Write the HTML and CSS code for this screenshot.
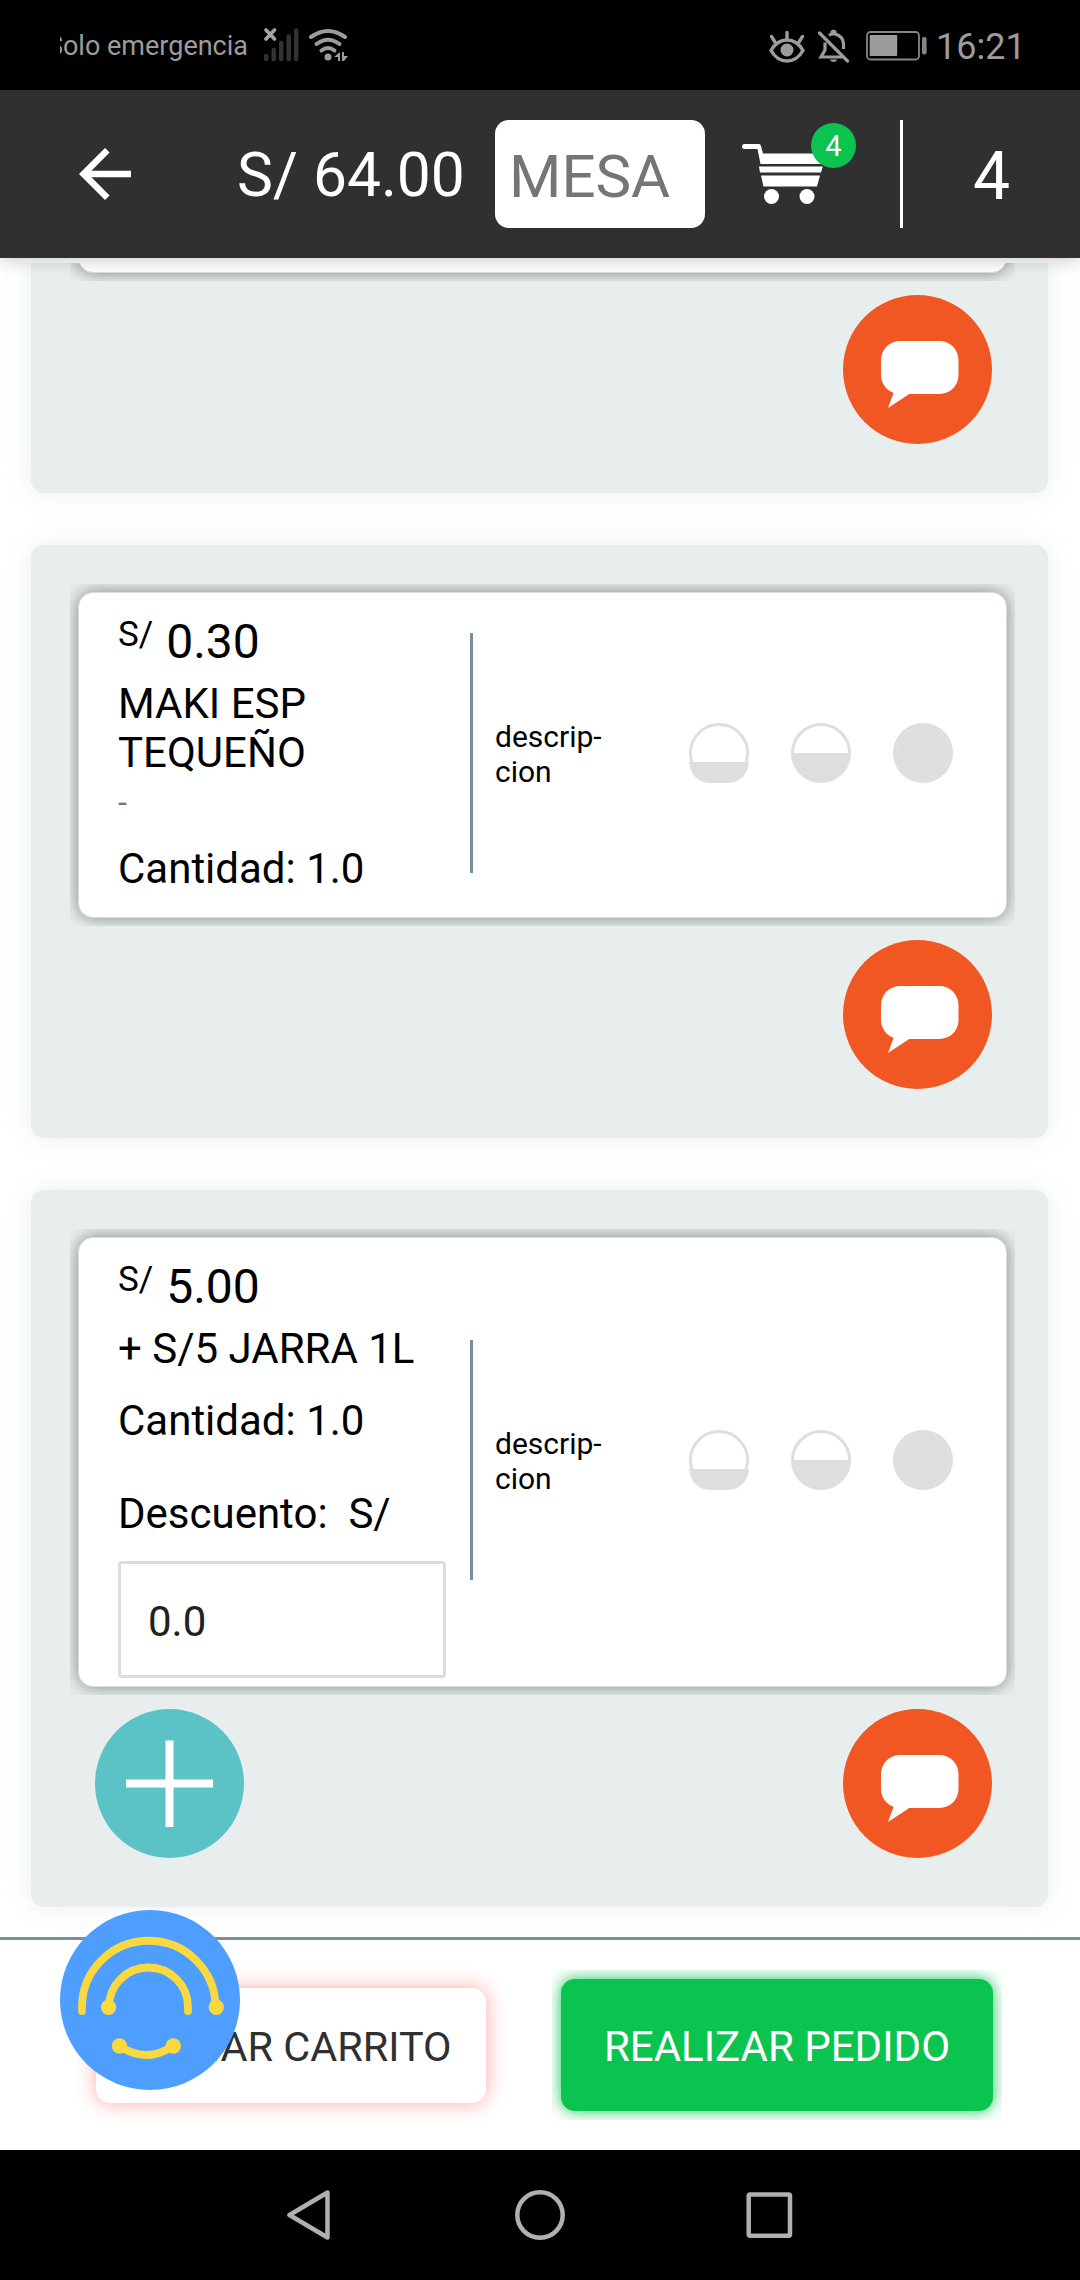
FILE: index.html
```html
<!DOCTYPE html>
<html lang="es">
<head>
<meta charset="utf-8">
<title>Carrito</title>
<link rel="stylesheet" href="styles.css">
</head>
<body>
<svg class="defs" width="0" height="0" aria-hidden="true">
  <symbol id="bubble" viewBox="0 0 149 149">
    <circle cx="74.5" cy="74.5" r="74.5" fill="#f15722"/>
    <rect x="38" y="46" width="77.5" height="53" rx="19" fill="#fff"/>
    <path d="M52 94L45 113L67 98.5Z" fill="#fff"/>
  </symbol>
  <symbol id="levels" viewBox="0 0 264 60">
    <g fill="none" stroke="#dedede" stroke-width="3">
      <path d="M2.960 39A28.500 28.500 0 1 1 57.040 39"/>
      <circle cx="132" cy="30" r="28.500"/>
    </g>
    <g fill="#dedede">
      <path d="M0 39H60C59 51 51 60 39 60H21C9 60 1 51 0 39Z"/>
      <path d="M103 30H161A29 29 0 0 1 103 30Z"/>
      <circle cx="234" cy="30" r="30"/>
    </g>
    <circle cx="234" cy="30" r="27" fill="none" stroke="#e3e3e3" stroke-width="1"/>
  </symbol>
</svg>
<div class="screen">
  <div class="status">
    <div class="carrier"><span>Solo emergencia</span></div>
    <svg class="signal" width="36" height="34" viewBox="264 28 36 34">
      <path d="M266.200 56V59M273.700 50V59M281.200 43V59M288.700 36.500V59M296.200 30.500V59" stroke="#333" stroke-width="4.400" stroke-linecap="round"/>
      <path d="M266 30L274.500 39M274.500 30L266 39" stroke="#a5a5a5" stroke-width="3.600" stroke-linecap="round"/>
    </svg>
    <svg class="wifi" width="40" height="34" viewBox="308 28 40 34">
      <g fill="none" stroke="#9c9c9c" stroke-width="4" stroke-linecap="round">
        <path d="M311 37Q328 25 345 37"/><path d="M316.500 44Q328 35.500 339.500 44"/><path d="M321.500 50.500Q328 45.500 334.500 50.500"/>
      </g>
      <circle cx="328" cy="57" r="3.500" fill="#9c9c9c"/>
      <path d="M334 57L340 52V61H338V57ZM342 52V61H344L348 56H344V52Z" fill="#9c9c9c"/>
    </svg>
    <svg class="eye" width="36" height="34" viewBox="769 29 36 34">
      <g fill="none" stroke="#9c9c9c" stroke-width="3.400" stroke-linecap="round">
        <path d="M771 50.500Q777 40 787 40Q797 40 803 50.500Q797 61 787 61Q777 61 771 50.500Z"/>
        <path d="M787 32.500V38M771.500 36.500L775 42M802.500 36.500L799 42"/>
      </g>
      <circle cx="787" cy="50" r="6.500" fill="#9c9c9c"/>
    </svg>
    <svg class="bell" width="32" height="34" viewBox="818 29 32 34">
      <g fill="none" stroke="#9c9c9c" stroke-width="3.200">
        <path d="M819.500 33L847.500 61" stroke-linecap="round"/>
        <path d="M825 42.500V50L821 57H842"/>
        <path d="M829 35.500Q831 34 832 34V32Q833.500 30 835 32V34Q843 36 843.500 44V49"/>
      </g>
      <path d="M829.500 59.500H837.500Q833.500 64.500 829.500 59.500Z" fill="#9c9c9c"/>
    </svg>
    <svg class="battery" width="61" height="30" viewBox="866 31 61 30">
      <rect x="867" y="32" width="52" height="27.500" rx="3.500" fill="none" stroke="#858585" stroke-width="1.800"/>
      <rect x="869.700" y="35" width="27.500" height="21" rx="1" fill="#9c9c9c"/>
      <rect x="922" y="37" width="4.600" height="17.500" rx="2" fill="#858585"/>
    </svg>
    <span class="clock">16:21</span>
  </div>

  <header class="bar">
    <svg class="back" width="78" height="78" viewBox="0 0 24 24"><path d="M20 11H7.830l5.590-5.590L12 4l-8 8 8 8 1.410-1.410L7.830 13H20v-2z" fill="#fff"/></svg>
    <span class="total">S/ 64.00</span>
    <input class="table" type="text" placeholder="MESA" aria-label="Mesa">
    <div class="cart">
      <svg width="82" height="60" viewBox="742 144 82 60" fill="#fff">
        <path d="M744.500 144H759Q760.500 144 761 146L763 153.500H823.500V164H760.500L757.500 149H744.500Q742 149 742 146.500Q742 144 744.500 144Z"/>
        <path d="M759 166.500H822.800L821 172.500H760Z"/>
        <path d="M761 175.500H820L817 186.500H763.500Z"/>
        <circle cx="771.500" cy="196.500" r="7.500"/><circle cx="807" cy="196.500" r="7.500"/>
      </svg>
      <span class="badge">4</span>
    </div>
    <span class="rule"></span>
    <span class="count">4</span>
  </header>

  <main class="list">
    <section class="panel">
      <div class="glow"><div class="card"></div></div>
      <div class="actions"><svg class="round"><use href="#bubble"/></svg></div>
    </section>

    <section class="panel">
      <div class="glow"><div class="card">
        <div class="info">
          <div class="price"><span class="cur">S/</span><span>0.30</span></div>
          <div class="name">MAKI ESP TEQUEÑO</div>
          <div class="note">-</div>
          <div class="qty">Cantidad: 1.0</div>
        </div>
        <span class="split"></span>
        <div class="desc">descrip-<br>cion</div>
        <svg class="levels"><use href="#levels"/></svg>
      </div></div>
      <div class="actions"><svg class="round"><use href="#bubble"/></svg></div>
    </section>

    <section class="panel">
      <div class="glow"><div class="card tall">
        <div class="info">
          <div class="price"><span class="cur">S/</span><span>5.00</span></div>
          <div class="name">+ S/5 JARRA 1L</div>
          <div class="qty">Cantidad: 1.0</div>
          <div class="discount">Descuento:&nbsp; S/</div>
          <div class="field">0.0</div>
        </div>
        <span class="split"></span>
        <div class="desc">descrip-<br>cion</div>
        <svg class="levels"><use href="#levels"/></svg>
      </div></div>
      <div class="actions">
        <svg class="round add" viewBox="0 0 149 149"><circle cx="74.500" cy="74.500" r="74.500" fill="#5bc3c6"/><path d="M31 74.500H118M74.500 31.500V118" stroke="#fff" stroke-width="8"/></svg>
        <svg class="round"><use href="#bubble"/></svg>
      </div>
    </section>
  </main>

  <footer class="foot">
    <div class="btn clear">VACIAR CARRITO</div>
    <div class="halo"><div class="btn order">REALIZAR PEDIDO</div></div>
    <svg class="float" width="180" height="180" viewBox="0 0 180 180">
      <circle cx="90" cy="90" r="90" fill="#4d9eff"/>
      <g fill="none" stroke="#f9d840" stroke-width="7.800" stroke-linecap="round">
        <path d="M22 101V97A66.500 66 0 0 1 155.500 97"/>
        <path d="M49 97A39.500 39.500 0 0 1 128 97V101"/>
        <path d="M59.500 136Q86.500 154 113 136"/>
      </g>
      <g fill="#f9d840"><circle cx="156.300" cy="97.300" r="7.700"/><circle cx="48.500" cy="97.300" r="7.700"/><circle cx="59.500" cy="136" r="7.700"/><circle cx="113.300" cy="136" r="7.700"/></g>
    </svg>
  </footer>

  <nav class="nav">
    <svg width="506" height="50" viewBox="287 2190 506 50" fill="none" stroke="#b0b0b0" stroke-width="4.500" stroke-linejoin="round">
      <path d="M289.500 2215L327.500 2192.500V2237.500Z"/>
      <circle cx="540" cy="2215" r="22.700"/>
      <rect x="748.700" y="2194.500" width="41.300" height="41.300" rx="1.500"/>
    </svg>
  </nav>
</div>
</body>
</html>
```
FILE: styles.css
```css
* { box-sizing: border-box; }
body { margin: 0; background: #fff; font-family: Roboto, "Noto Sans", sans-serif; color: #000; }
.defs { position: absolute; }
svg { display: block; flex: none; }
.screen { width: 1080px; height: 2280px; display: flex; flex-direction: column; overflow: hidden; }

.status { height: 90px; background: #000; color: #9c9c9c; display: flex; align-items: center; padding-left: 60px; flex: none; }
.carrier { width: 188px; overflow: hidden; display: flex; justify-content: flex-end; font-size: 27px; line-height: 34px; margin-top: 2px; white-space: nowrap; flex: none; }
.signal { margin-left: 16px; }
.wifi { margin-left: 8px; }
.eye { margin-left: 421px; margin-top: 2px; }
.bell { margin-left: 13px; margin-top: 2px; }
.battery { margin-left: 16px; margin-top: 2px; }
.clock { margin-left: 9px; font-size: 36px; line-height: 44px; margin-top: 4px; }

.bar { height: 168px; background: #303030; color: #fff; display: flex; align-items: center; padding-left: 66px; flex: none; z-index: 2; box-shadow: 0 2px 16px rgba(0, 0, 0, .22); }
.total { width: 258px; margin-left: 93px; font-size: 60.5px; line-height: 70px; margin-top: 4px; white-space: nowrap; }
.table { width: 210px; height: 108px; border: 0; border-radius: 14px; padding: 5px 14px 0; background: #fff; font: 60px Roboto, sans-serif; outline: 0; }
.table::placeholder { color: #757575; opacity: 1; }
.cart { position: relative; margin-left: 37px; }
.badge { position: absolute; left: 69px; top: -21px; width: 45px; height: 45px; border-radius: 50%; background: #0bc44f; font-size: 29px; line-height: 47px; text-align: center; }
.rule { width: 3px; height: 108px; background: #fff; margin-left: 76px; }
.count { font-size: 66px; line-height: 76px; margin: 6px 0 0 70px; }

.list { height: 1674px; margin-top: 5px; padding: 0 32px 30px 31px; display: flex; flex-direction: column; justify-content: flex-end; gap: 52px; overflow: hidden; flex: none; }
.panel { background: #e8eeee; border-radius: 13px; padding: 39px 33px 49px 39px; box-shadow: 0 0 28px rgba(222, 232, 230, .6); flex: none; }
.glow { padding: 8px; overflow: hidden; }
.card { height: 326px; background: #fff; border-radius: 15px; border: 1px solid #dcdede; box-shadow: 0 0 17px rgba(0, 0, 0, .45); display: flex; align-items: center; padding: 0 53px 0 39px; }
.card.tall { height: 450px; }
.info { width: 328px; flex: none; align-self: flex-start; padding-top: 21px; font-size: 42px; line-height: 49px; }
.price { display: flex; align-items: flex-start; gap: 13px; font-size: 48px; line-height: 56px; margin-bottom: 9px; }
.cur { font-size: 35px; line-height: 41px; }
.name { width: 310px; }
.note { font-size: 32px; line-height: 38px; margin-top: 6px; color: #757575; }
.qty { margin-top: 23px; }
.discount { margin-top: 44px; }
.field { margin-top: 23px; height: 117px; border: 3px solid #dcdcdc; border-radius: 4px; padding-left: 27px; line-height: 115px; color: #212121; }
.split { width: 3px; height: 240px; background: #78909c; margin: 0 22px 4px 24px; }
.desc { font-size: 30px; line-height: 35px; margin-bottom: 3px; }
.levels { width: 264px; height: 60px; margin: 0 0 4px auto; }
.actions { display: flex; justify-content: flex-end; margin-top: 14px; padding: 0 23px 0 25px; }
.round { width: 149px; height: 149px; }
.add { margin-right: auto; }

.foot { position: relative; height: 213px; border-top: 3px solid #78909c; display: flex; align-items: center; padding: 0 78px 0 96px; background: #fff; flex: none; z-index: 1; }
.btn { border-radius: 14px; font-size: 42px; display: flex; align-items: center; justify-content: center; white-space: nowrap; }
.clear { width: 390px; height: 115px; background: #fff; color: #303030; box-shadow: 0 0 20px rgba(255, 60, 50, .45); padding: 3px 0 0; font-size: 41.4px; }
.halo { margin-left: 66px; padding: 9px; overflow: hidden; }
.order { width: 432px; height: 132px; background: #0bc44f; color: #fff; box-shadow: 0 0 16px rgba(11, 196, 79, .95); padding-top: 3px; }
.float { position: absolute; left: 60px; top: -30px; }
.nav { height: 130px; background: #000; display: flex; justify-content: center; align-items: center; flex: none; }
```
